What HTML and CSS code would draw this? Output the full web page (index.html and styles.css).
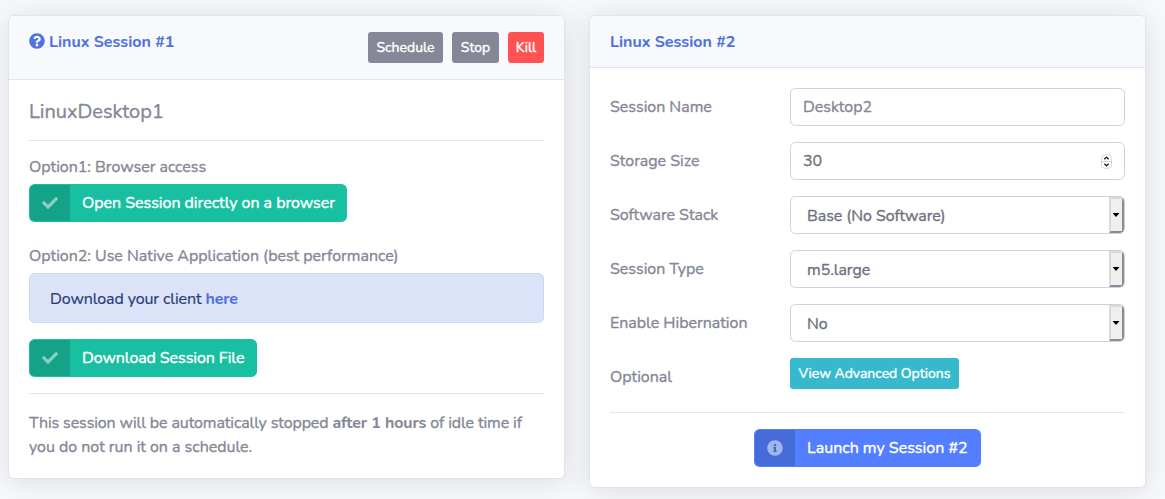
FILE: index.html
```html
<!DOCTYPE html>
<html lang="en">
<head>
<meta charset="utf-8">
<title>Linux Sessions</title>
<link rel="stylesheet" href="styles.css">
</head>
<body>
<main class="row">
  <section class="card card-active">
    <header class="card-header">
      <h6 class="title"><svg class="icon" viewBox="0 0 512 512"><path d="M504 256c0 136.997-111.043 248-248 248S8 392.997 8 256C8 119.083 119.043 8 256 8s248 111.083 248 248zM262.655 90c-54.497 0-89.255 22.957-116.549 63.758-3.536 5.286-2.353 12.415 2.715 16.258l34.699 26.31c5.205 3.947 12.621 3.008 16.665-2.122 17.864-22.658 30.113-35.797 57.303-35.797 20.429 0 45.698 13.148 45.698 32.958 0 14.976-12.363 22.667-32.534 33.976C247.128 238.528 216 254.941 216 296v4c0 6.627 5.373 12 12 12h56c6.627 0 12-5.373 12-12v-1.333c0-28.462 83.186-29.647 83.186-106.667 0-58.002-60.165-102-116.531-102zM256 338c-25.365 0-46 20.635-46 46 0 25.364 20.635 46 46 46s46-20.636 46-46c0-25.365-20.635-46-46-46z"/></svg><span>Linux Session #1</span></h6>
      <div class="actions">
        <button class="btn-sm gray schedule">Schedule</button>
        <button class="btn-sm gray stop">Stop</button>
        <button class="btn-sm red kill">Kill</button>
      </div>
    </header>
    <div class="card-body">
      <h5 class="name">LinuxDesktop1</h5>
      <hr>
      <p class="option">Option1: Browser access</p>
      <a class="btn green open"><span class="btn-icon"><svg class="icon" viewBox="0 0 512 512"><path d="M173.898 439.404l-166.4-166.4c-9.997-9.997-9.997-26.206 0-36.204l36.203-36.204c9.997-9.998 26.207-9.998 36.204 0L192 312.69 432.095 72.596c9.997-9.997 26.207-9.997 36.204 0l36.203 36.204c9.997 9.997 9.997 26.206 0 36.204l-294.4 294.401c-9.998 9.997-26.207 9.997-36.204-.001z"/></svg></span><span class="btn-text">Open Session directly on a browser</span></a>
      <p class="option second">Option2: Use Native Application (best performance)</p>
      <div class="alert">Download your client <b>here</b></div>
      <a class="btn green file"><span class="btn-icon"><svg class="icon" viewBox="0 0 512 512"><path d="M173.898 439.404l-166.4-166.4c-9.997-9.997-9.997-26.206 0-36.204l36.203-36.204c9.997-9.998 26.207-9.998 36.204 0L192 312.69 432.095 72.596c9.997-9.997 26.207-9.997 36.204 0l36.203 36.204c9.997 9.997 9.997 26.206 0 36.204l-294.4 294.401c-9.998 9.997-26.207 9.997-36.204-.001z"/></svg></span><span class="btn-text">Download Session File</span></a>
      <hr>
      <p class="note"><span class="tight">This session will be automatically stopped <b>after 1 hours</b> of idle time if</span><br>you do not run it on a schedule.</p>
    </div>
  </section>

  <section class="card card-new">
    <header class="card-header"><h6 class="title"><span>Linux Session #2</span></h6></header>
    <div class="card-body">
      <div class="form">
        <div class="field"><span class="label">Session Name</span><div class="control placeholder"><span>Desktop2</span></div></div>
        <div class="field"><span class="label">Storage Size</span><div class="control"><span>30</span><svg class="spinner" viewBox="0 0 13 17"><rect class="spin-box" x="1.5" y="1.5" width="10" height="14" rx="4"/><path class="spin-line" d="M1.5 8.5h10"/><path class="spin-mark" d="M4.3 6.2 6.5 4.2l2.2 2M4.3 10.8l2.2 2 2.2-2"/></svg></div></div>
        <div class="field"><span class="label">Software Stack</span><div class="control select"><span>Base (No Software)</span><i class="arrow"></i></div></div>
        <div class="field"><span class="label">Session Type</span><div class="control select"><span>m5.large</span><i class="arrow"></i></div></div>
        <div class="field"><span class="label">Enable Hibernation</span><div class="control select"><span>No</span><i class="arrow"></i></div></div>
        <div class="field"><span class="label">Optional</span><button class="btn-sm cyan advanced">View Advanced Options</button></div>
      </div>
      <hr>
      <a class="btn blue launch"><span class="btn-icon"><svg class="icon" viewBox="0 0 512 512"><path d="M256 8C119.043 8 8 119.083 8 256c0 136.997 111.043 248 248 248s248-111.003 248-248C504 119.083 392.957 8 256 8zm0 110c23.196 0 42 18.804 42 42s-18.804 42-42 42-42-18.804-42-42 18.804-42 42-42zm56 254c0 6.627-5.373 12-12 12h-88c-6.627 0-12-5.373-12-12v-24c0-6.627 5.373-12 12-12h12v-64h-12c-6.627 0-12-5.373-12-12v-24c0-6.627 5.373-12 12-12h64c6.627 0 12 5.373 12 12v100h12c6.627 0 12 5.373 12 12v24z"/></svg></span><span class="btn-text">Launch my Session #2</span></a>
    </div>
  </section>
</main>
</body>
</html>
```
FILE: styles.css
```css
* { box-sizing: border-box; }
body { margin: 0; height: 499px; overflow: hidden; background: #f8f9fc; color: #858796; font: 400 16px/24px Nunito, Lato, sans-serif; letter-spacing: -.025px; -webkit-text-stroke: .35px currentColor; }
h5, h6, p { margin: 0; }
b, .title { -webkit-text-stroke: .1px currentColor; }
button { border: 0; font-family: inherit; }
.row { display: flex; align-items: flex-start; gap: 24px; padding: 15px 19px 0 8px; }
.card { width: 557px; flex: none; background: #fff; border: 1px solid #e3e6f0; border-color: #e1e2ef; border-radius: 5.6px; box-shadow: 0 2.4px 28px rgba(58, 59, 69, .15); }
.card-active { height: 464px; }
.card-new { height: 473px; }
.card-header { display: flex; justify-content: space-between; align-items: flex-start; padding: 16px 20px 0; height: 64px; background: #f8f9fc; border-bottom: 1px solid #e1e2ef; border-radius: 5px 5px 0 0; }
.card-new .card-header { height: 52px; }
.title { display: flex; align-items: center; height: 19px; gap: 4px; color: #4e73df; font-size: 16px; font-weight: 700; white-space: nowrap; letter-spacing: 0; }
.icon { display: block; width: 16px; height: 16px; fill: currentColor; }
.title .icon { margin-top: -1px; }
.actions { display: flex; gap: 9px; }
.btn-sm { display: block; height: 31px; padding: 0; border-radius: 3.2px; color: #fff; font-size: 14px; font-weight: 400; line-height: 30px; text-align: center; white-space: nowrap; -webkit-text-stroke: .4px currentColor; }
.gray { background: #858796; }
.red { background: #ff5252; }
.cyan { background: #36b9cc; }
.schedule { width: 75px; }
.stop { width: 47px; }
.kill { width: 36px; }
.advanced { width: 169px; }
.card-body { padding: 20px 20px 0; }
hr { height: 1px; margin: 16px 0; border: 0; background: #e5e5e8; }
.name { height: 24px; font-size: 20px; font-weight: 400; line-height: 24px; }
.name + hr { margin-bottom: 14px; }
.option { height: 29px; white-space: nowrap; }
.second { margin-top: 22px; }
.btn { display: flex; height: 38px; overflow: hidden; border-radius: 5.6px; color: #fff; white-space: nowrap; line-height: 38px; -webkit-text-stroke: .4px currentColor; }
.btn-icon { display: flex; align-items: center; justify-content: center; width: 40px; height: 36px; margin: 1px 0 1px 1px; background: rgba(0, 0, 0, .15); border-radius: 5px 0 0 5px; color: rgba(255, 255, 255, .5); }
.btn-text { margin-left: 12px; }
.green { background: #18bfa1; }
.blue { background: #527eff; }
.open { width: 318px; }
.file { width: 228px; letter-spacing: -.09px; }
.launch { width: 227px; margin: 0 auto; letter-spacing: 0; }
.alert { height: 50px; margin-bottom: 16px; padding: 13px 20px; background: #dce3f9; border: 1px solid #cdd8f6; border-radius: 5.6px; color: #293c74; white-space: nowrap; letter-spacing: -.11px; -webkit-text-stroke-width: .2px; }
.alert b { color: #4e73df; }
.note { padding-top: 1px; white-space: nowrap; }
.tight { letter-spacing: -.115px; }
.form { height: 308px; }
.field { display: flex; height: 38px; margin-bottom: 16px; }
.label { width: 180px; line-height: 38px; white-space: nowrap; }
.control { display: flex; flex: 1; align-items: center; justify-content: space-between; padding-left: 12px; border: 1px solid #d1d3e2; border-color: #d0d0e4; border-radius: 5.6px; color: #6e707e; line-height: 36px; overflow: hidden; }
.placeholder { color: #858796; }
.select { padding-left: 16px; }
.select span { padding-top: 2px; letter-spacing: -.06px; }
.arrow { display: flex; align-items: center; justify-content: center; width: 15px; height: 36px; background: #efefef; border: 2px solid; border-color: #d9d9dc #8b8b8f #8b8b8f #d9d9dc; }
.arrow::after { content: ""; width: 7px; height: 4px; margin-right: 1px; background: #000; clip-path: polygon(0 0, 100% 0, 50% 100%); }
.spinner { width: 13px; height: 17px; margin-right: 11px; }
.spin-box { fill: #fff; stroke: #d4d4d4; stroke-width: 1; }
.spin-line { stroke: #d4d4d4; stroke-width: 1; }
.spin-mark { fill: none; stroke: #222; stroke-width: 1.3; }
```
